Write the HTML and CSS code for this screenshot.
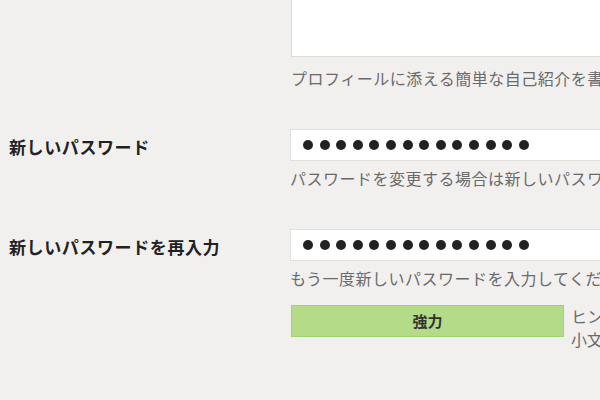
FILE: index.html
```html
<!DOCTYPE html>
<html lang="ja">
<head>
<meta charset="utf-8">
<title>プロフィール</title>
<link rel="stylesheet" href="styles.css">
</head>
<body>
<div class="form">
  <div class="row">
    <div class="label"></div>
    <div class="field">
      <div class="textarea"></div>
      <p class="hint hint-bio">プロフィールに添える簡単な自己紹介を書いてください。</p>
    </div>
  </div>
  <div class="row row-pass">
    <div class="label">新しいパスワード</div>
    <div class="field">
      <div class="input"><span class="dot"></span><span class="dot"></span><span class="dot"></span><span class="dot"></span><span class="dot"></span><span class="dot"></span><span class="dot"></span><span class="dot"></span><span class="dot"></span><span class="dot"></span><span class="dot"></span><span class="dot"></span><span class="dot"></span><span class="dot"></span></div>
      <p class="hint">パスワードを変更する場合は新しいパスワードを入力してください。</p>
    </div>
  </div>
  <div class="row row-pass">
    <div class="label">新しいパスワードを再入力</div>
    <div class="field">
      <div class="input"><span class="dot"></span><span class="dot"></span><span class="dot"></span><span class="dot"></span><span class="dot"></span><span class="dot"></span><span class="dot"></span><span class="dot"></span><span class="dot"></span><span class="dot"></span><span class="dot"></span><span class="dot"></span><span class="dot"></span><span class="dot"></span></div>
      <p class="hint">もう一度新しいパスワードを入力してください。</p>
      <div class="strength-row">
        <div class="strength">強力</div>
        <p class="strength-hint">ヒント: パスワードは７文字以上で、<br>小文字、大文字、数字、記号を組み合わせてください。</p>
      </div>
    </div>
  </div>
</div>
</body>
</html>
```

FILE: styles.css
```css
html, body {
  margin: 0;
  padding: 0;
  overflow: hidden;
  width: 600px;
  height: 400px;
  background: #f1f0ee;
  font-family: "Noto Sans CJK JP", "Noto Sans", sans-serif;
}

.form {
  width: 900px;
}

.row {
  display: grid;
  grid-template-columns: 290px 560px;
}

.row-pass {
  margin-top: 40px;
}

.label {
  padding-left: 9px;
  padding-top: 2px;
  font-size: 17px;
  font-weight: bold;
  letter-spacing: 0.6px;
  line-height: 32px;
  color: #222;
  white-space: nowrap;
}

.field {
  min-width: 0;
}

.textarea {
  box-sizing: border-box;
  height: 57px;
  background: #fff;
  border: 1px solid #dddbd8;
  border-top: 0;
  margin-left: 1px;
}

.input {
  box-sizing: border-box;
  height: 32px;
  background: #fff;
  border: 1px solid #e2e0dd;
  display: flex;
  align-items: center;
  gap: 6.6px;
  padding-left: 12px;
}

.dot {
  width: 10px;
  height: 10px;
  border-radius: 50%;
  background: #222;
  flex: none;
}

.hint {
  margin: 6px 0 0;
  font-size: 16px;
  letter-spacing: 0.5px;
  line-height: 22px;
  color: #6a6a6a;
  white-space: nowrap;
}

.hint-bio {
  margin-top: 10px;
  margin-left: 1px;
}

.strength-row {
  margin-top: 16px;
  display: flex;
  align-items: flex-start;
  gap: 7px;
}

.strength {
  box-sizing: border-box;
  flex: none;
  width: 273px;
  height: 32px;
  margin-left: 1px;
  background: #b4db88;
  border: 1px solid #a2d276;
  text-align: center;
  font-size: 15px;
  font-weight: bold;
  line-height: 30px;
  color: #333;
}

.strength-hint {
  margin: 0;
  font-size: 16px;
  line-height: 23px;
  color: #6a6a6a;
  white-space: nowrap;
}
```
